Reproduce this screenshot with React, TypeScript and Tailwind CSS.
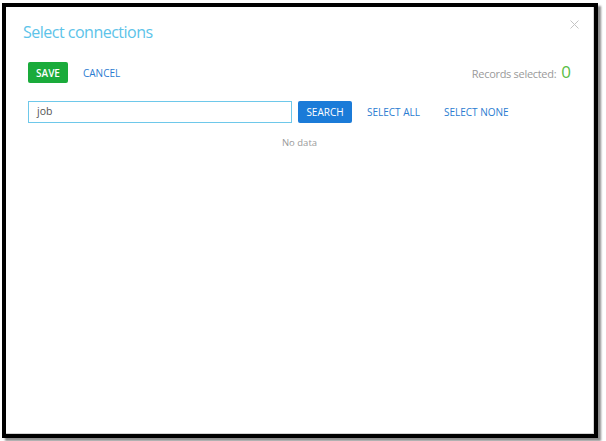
import React from "react";

export default function App() {
  return (
    <div className="w-[606px] h-[441px] bg-white pl-[2px] pt-[3px]" style={{ fontFamily: '"Open Sans", "Noto Sans", sans-serif' }}>
      <div className="w-[596px] h-[435px] border-4 border-black shadow-[3px_3px_2px_rgba(0,0,0,0.45)]">
        <div className="relative h-full border-r border-b border-[#d4d4d4] bg-white">
          <button className="absolute right-[14px] top-[13px] w-[9px] h-[9px]" aria-label="close">
            <svg viewBox="0 0 9 9" className="w-[9px] h-[9px]" fill="none" stroke="#c4c4c4" strokeWidth="1">
              <path d="M0.5 0.5 L8.5 8.5 M8.5 0.5 L0.5 8.5" />
            </svg>
          </button>
          <div className="pl-[17px] pt-[14px] text-[16px] leading-[22px] text-[#5cc3e9] tracking-[-0.5px]">Select connections</div>
          <div className="flex items-center mt-[19px] pl-[22px] pr-[22px]">
            <button className="w-[40px] h-[21px] bg-[#1aab3b] rounded-[2px] text-white text-[10px] font-semibold leading-none">SAVE</button>
            <span className="ml-[15px] text-[10px] text-[#2b7cd1] leading-none">CANCEL</span>
            <div className="ml-auto flex items-baseline">
              <span className="text-[11px] tracking-[-0.3px] text-[#9a9a9a]">Records selected:</span>
              <span className="ml-[5px] text-[17px] leading-none text-[#59bd45]">0</span>
            </div>
          </div>
          <div className="flex items-center mt-[18px] pl-[22px]">
            <div className="w-[264px] h-[22px] border border-[#6ec8ea] flex items-center pl-[8px] text-[10.5px] text-[#555]">job</div>
            <button className="ml-[6px] w-[54px] h-[22px] bg-[#1b7bd8] rounded-[2px] text-white text-[10px] leading-none">SEARCH</button>
            <span className="ml-[15px] text-[10px] text-[#2b7cd1] leading-none">SELECT ALL</span>
            <span className="ml-[24px] text-[10px] text-[#2b7cd1] leading-none">SELECT NONE</span>
          </div>
          <div className="mt-[13px] text-center text-[9.5px] text-[#9a9a9a]">No data</div>
        </div>
      </div>
    </div>
  );
}
